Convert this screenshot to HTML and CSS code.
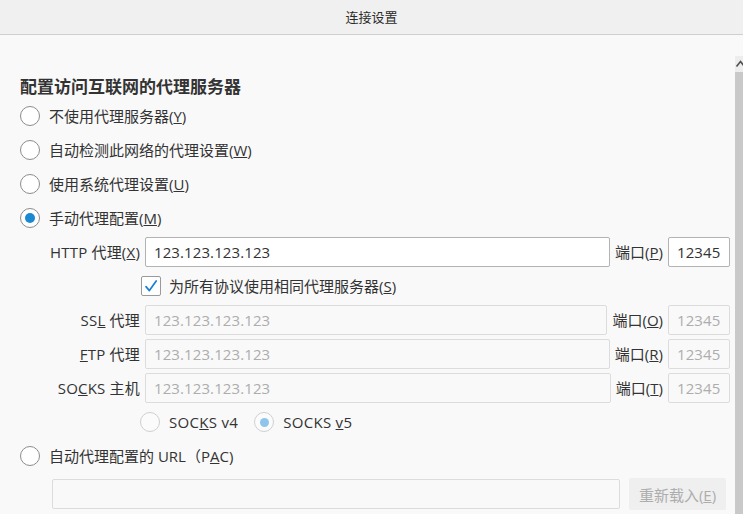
FILE: index.html
```html
<!DOCTYPE html>
<html lang="zh-CN">
<head>
<meta charset="utf-8">
<title>连接设置</title>
<link rel="stylesheet" href="styles.css">
</head>
<body>
<header class="titlebar">连接设置</header>
<div class="main">
  <div class="content">
    <h1 class="heading">配置访问互联网的代理服务器</h1>
    <div class="option"><span class="radio"></span><span>不使用代理服务器(<u>Y</u>)</span></div>
    <div class="option"><span class="radio"></span><span>自动检测此网络的代理设置(<u>W</u>)</span></div>
    <div class="option"><span class="radio"></span><span>使用系统代理设置(<u>U</u>)</span></div>
    <div class="option"><span class="radio checked"></span><span>手动代理配置(<u>M</u>)</span></div>

    <div class="proxy-row">
      <label class="proxy-label">HTTP 代理(<u>X</u>)</label>
      <input class="field host" type="text" value="123.123.123.123">
      <label class="port-label">端口(<u>P</u>)</label>
      <input class="field port" type="text" value="12345">
    </div>

    <div class="share-row">
      <span class="checkbox"><svg width="20" height="20" viewBox="0 0 20 20"><path d="M5 10.6 L8.4 14.6 L15.2 5" fill="none" stroke="#1a7fd4" stroke-width="1.7" stroke-linecap="round" stroke-linejoin="round"/></svg></span>
      <span>为所有协议使用相同代理服务器(<u>S</u>)</span>
    </div>

    <div class="proxy-row">
      <label class="proxy-label">SS<u>L</u> 代理</label>
      <input class="field host" type="text" value="123.123.123.123" disabled>
      <label class="port-label">端口(<u>O</u>)</label>
      <input class="field port" type="text" value="12345" disabled>
    </div>
    <div class="proxy-row">
      <label class="proxy-label"><u>F</u>TP 代理</label>
      <input class="field host" type="text" value="123.123.123.123" disabled>
      <label class="port-label">端口(<u>R</u>)</label>
      <input class="field port" type="text" value="12345" disabled>
    </div>
    <div class="proxy-row">
      <label class="proxy-label">SO<u>C</u>KS 主机</label>
      <input class="field host" type="text" value="123.123.123.123" disabled>
      <label class="port-label">端口(<u>T</u>)</label>
      <input class="field port" type="text" value="12345" disabled>
    </div>

    <div class="socks-row">
      <span class="socks-item"><span class="radio disabled"></span><span>SOC<u>K</u>S v4</span></span>
      <span class="socks-item"><span class="radio disabled checked"></span><span>SOCKS <u>v</u>5</span></span>
    </div>

    <div class="option"><span class="radio"></span><span>自动代理配置的 URL（P<u>A</u>C)</span></div>

    <div class="url-row">
      <input class="field url" type="text" value="" disabled>
      <button class="reload" type="button" disabled>重新载入(<u>E</u>)</button>
    </div>
  </div>
  <div class="scrollbar">
    <div class="scroll-arrow"><svg width="8" height="16" viewBox="0 0 8 16"><path d="M1.5 10.5 L5.5 5.5 L9.5 10.5" fill="none" stroke="#505050" stroke-width="1.6"/></svg></div>
    <div class="scroll-thumb"></div>
  </div>
</div>
</body>
</html>
```

FILE: styles.css
```css
html, body {
  height: 100%;
}

body {
  margin: 0;
  background: #f9f9f9;
  font-family: "Open Sans", "Noto Sans CJK SC", sans-serif;
  color: #333;
  font-size: 15px;
  display: flex;
  flex-direction: column;
  overflow: hidden;
}

.titlebar {
  flex: none;
  height: 34px;
  line-height: 34px;
  text-align: center;
  font-size: 13px;
  color: #2b2b2b;
  background: #f0f0f0;
  border-bottom: 1px solid #cfcfcf;
}

.main {
  flex: 1;
  display: flex;
  min-height: 0;
}

.content {
  flex: 1;
  padding: 40px 5px 0 20px;
  min-width: 0;
}

.heading {
  margin: 0;
  font-size: 17px;
  font-weight: bold;
  line-height: 24px;
  color: #333;
}

.option {
  display: flex;
  align-items: center;
  gap: 9px;
  height: 34px;
  line-height: 20px;
  white-space: nowrap;
}

.radio {
  flex: none;
  width: 20px;
  height: 20px;
  box-sizing: border-box;
  border: 1px solid #8c8c8c;
  border-radius: 50%;
  background: #fff;
  display: flex;
  align-items: center;
  justify-content: center;
}

.radio.checked::after {
  content: "";
  width: 10px;
  height: 10px;
  border-radius: 50%;
  background: #1b88d2;
}

.radio.disabled {
  border-color: #d0d0d0;
  background: #fbfbfb;
}

.radio.disabled.checked::after {
  width: 9px;
  height: 9px;
  background: #8fc5ea;
}

.proxy-row {
  display: flex;
  align-items: center;
  gap: 5px;
  height: 34px;
  white-space: nowrap;
}

.proxy-label {
  flex: none;
  width: 120px;
  text-align: right;
  line-height: 20px;
  letter-spacing: 0.2px;
}

.port-label {
  flex: none;
  line-height: 20px;
}

.field {
  box-sizing: border-box;
  height: 30px;
  margin: 0;
  padding: 0 8px;
  font-family: "Open Sans", "Noto Sans CJK SC", sans-serif;
  font-size: 15px;
  letter-spacing: 0.1px;
  color: #333;
  background: #fff;
  border: 1px solid #b3b3b3;
  border-radius: 2px;
  outline: none;
}

.field:disabled {
  color: #adadad;
  background: #f9f9f9;
  border-color: #dcdcdc;
}

.host {
  flex: 1;
  min-width: 0;
}

.port {
  flex: none;
  width: 62px;
}

.share-row {
  display: flex;
  align-items: center;
  gap: 8px;
  height: 34px;
  padding-left: 121px;
  line-height: 20px;
  white-space: nowrap;
}

.checkbox {
  flex: none;
  width: 20px;
  height: 20px;
  box-sizing: border-box;
  border: 1px solid #9a9a9a;
  border-radius: 2px;
  background: #fff;
  display: flex;
  align-items: center;
  justify-content: center;
}

.checkbox svg {
  display: block;
  margin: -1px;
}

.socks-row {
  display: flex;
  align-items: center;
  height: 34px;
  padding-left: 120px;
  line-height: 20px;
  white-space: nowrap;
}

.socks-item {
  display: flex;
  align-items: center;
  gap: 9px;
  margin-right: 16px;
  letter-spacing: 0.3px;
}

.url-row {
  display: flex;
  align-items: center;
  gap: 9px;
  height: 34px;
  margin-top: 4px;
  padding-left: 32px;
  margin-right: 4px;
}

.url {
  flex: 1;
  min-width: 0;
  border-color: #cfcfcf;
  background: #fbfbfb;
}

.reload {
  flex: none;
  width: 97px;
  height: 32px;
  padding: 0;
  font-family: "Open Sans", "Noto Sans CJK SC", sans-serif;
  font-size: 15px;
  color: #adadad;
  background: #efefef;
  border: none;
  border-radius: 2px;
}

.scrollbar {
  flex: none;
  width: 8px;
  margin-top: 21px;
  display: flex;
  flex-direction: column;
}

.scroll-arrow {
  flex: none;
  height: 16px;
  background: #ededed;
  overflow: hidden;
}

.scroll-arrow svg {
  display: block;
}

.scroll-thumb {
  flex: 1;
  background: #c9c9c9;
}
```
